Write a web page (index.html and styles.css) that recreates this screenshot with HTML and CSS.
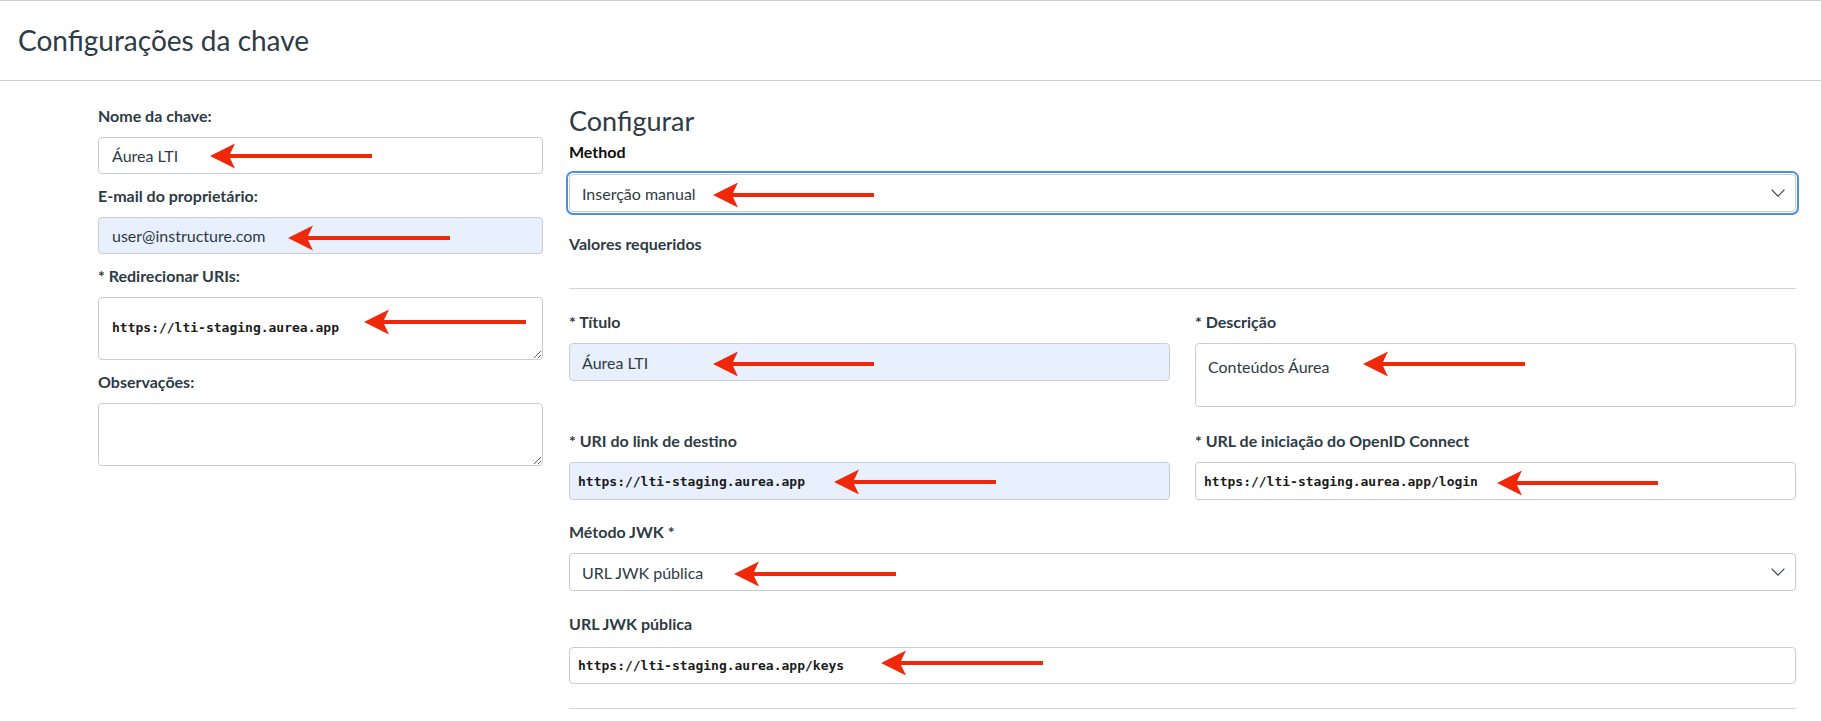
FILE: index.html
```html
<!DOCTYPE html>
<html lang="pt-BR">
<head>
<meta charset="utf-8">
<title>Configurações da chave</title>
<link rel="stylesheet" href="styles.css">
</head>
<body>
<header class="page-header">
  <h1 class="page-title">Configurações da chave</h1>
</header>
<main class="content">
  <section class="left-col">
    <div class="field">
      <label class="l-label">Nome da chave:</label>
      <input class="l-input" type="text" value="Áurea LTI">
    </div>
    <div class="field">
      <label class="l-label">E-mail do proprietário:</label>
      <input class="l-input autofill" type="text" value="user@instructure.com">
    </div>
    <div class="field">
      <label class="l-label">* Redirecionar URIs:</label>
      <textarea class="l-textarea mono">https://lti-staging.aurea.app</textarea>
    </div>
    <div class="field">
      <label class="l-label">Observações:</label>
      <textarea class="l-textarea"></textarea>
    </div>
  </section>

  <section class="right-col">
    <h2 class="r-heading">Configurar</h2>
    <div class="r-label method-label">Method</div>
    <div class="box select focused">
      <span>Inserção manual</span>
      <svg class="chevron" width="14" height="8" viewBox="0 0 14 8"><path d="M0.6 0.7 L7 7.2 L13.4 0.7" fill="none" stroke="#2d3b45" stroke-width="1.1"/></svg>
    </div>
    <div class="r-label section-label">Valores requeridos</div>
    <hr class="divider first-divider">

    <div class="grid2">
      <div class="cell">
        <div class="r-label">* Título</div>
        <div class="box autofill">Áurea LTI</div>
      </div>
      <div class="cell">
        <div class="r-label">* Descrição</div>
        <div class="box textarea-box">Conteúdos Áurea</div>
      </div>
      <div class="cell">
        <div class="r-label">* URI do link de destino</div>
        <div class="box autofill mono-box"><span class="mono">https://lti-staging.aurea.app</span></div>
      </div>
      <div class="cell">
        <div class="r-label">* URL de iniciação do OpenID Connect</div>
        <div class="box mono-box"><span class="mono">https://lti-staging.aurea.app/login</span></div>
      </div>
    </div>

    <div class="r-field">
      <div class="r-label">Método JWK *</div>
      <div class="box select">
        <span>URL JWK pública</span>
        <svg class="chevron" width="14" height="8" viewBox="0 0 14 8"><path d="M0.6 0.7 L7 7.2 L13.4 0.7" fill="none" stroke="#2d3b45" stroke-width="1.1"/></svg>
      </div>
    </div>
    <div class="r-field">
      <div class="r-label jwk-url-label">URL JWK pública</div>
      <div class="box mono-box short"><span class="mono">https://lti-staging.aurea.app/keys</span></div>
    </div>
    <hr class="divider last-divider">
  </section>
</main>

<svg class="annotations" width="1821" height="721" viewBox="0 0 1821 721">
  <g fill="#f0280a">
    <polygon points="210,156 235,143.5 230,154 372,154 372,158 230,158 235,168.5"/>
    <polygon points="288,238 313,225.5 308,236 450,236 450,240 308,240 313,250.5"/>
    <polygon points="364,322 389,309.5 384,320 526,320 526,324 384,324 389,334.5"/>
    <polygon points="713,195 738,182.5 733,193 874,193 874,197 733,197 738,207.5"/>
    <polygon points="713,364 738,351.5 733,362 874,362 874,366 733,366 738,376.5"/>
    <polygon points="834,482 859,469.5 854,480 996,480 996,484 854,484 859,494.5"/>
    <polygon points="1363,364 1388,351.5 1383,362 1525,362 1525,366 1383,366 1388,376.5"/>
    <polygon points="1497,483 1522,470.5 1517,481 1658,481 1658,485 1517,485 1522,495.5"/>
    <polygon points="734,574 759,561.5 754,572 896,572 896,576 754,576 759,586.5"/>
    <polygon points="881,663 906,650.5 901,661 1043,661 1043,665 901,665 906,675.5"/>
  </g>
</svg>
</body>
</html>
```

FILE: styles.css
```css
* { box-sizing: border-box; }

html, body {
  margin: 0;
  padding: 0;
}

body {
  position: relative;
  width: 1821px;
  height: 721px;
  overflow: hidden;
  background: #ffffff;
  color: #2d3b45;
  font-family: Lato, "Noto Sans", sans-serif;
  font-size: 16px;
}

/* ---------- header ---------- */
.page-header {
  border-top: 1px solid #c7cdd1;
  border-bottom: 1px solid #c7cdd1;
  padding: 23px 18px;
}

.page-title {
  margin: 0;
  font-size: 28px;
  line-height: 33px;
  font-weight: 400;
  color: #2d3b45;
}

/* ---------- layout ---------- */
.content {
  display: flex;
  align-items: flex-start;
  gap: 26px;
  padding-left: 98px;
}

.left-col {
  width: 445px;
  padding-top: 24px;
  display: flex;
  flex-direction: column;
  gap: 11px;
}

.right-col {
  width: 1227px;
  padding-top: 23px;
}

/* ---------- left column ---------- */
.field {
  display: flex;
  flex-direction: column;
}

.l-label {
  display: block;
  font-weight: 700;
  font-size: 16px;
  line-height: 22px;
  margin-bottom: 10px;
  color: #2d3b45;
}

.l-input {
  height: 37px;
  width: 100%;
  border: 1px solid #c7cdd1;
  border-radius: 4px;
  padding: 0 13px;
  font-family: Lato, "Noto Sans", sans-serif;
  font-size: 16px;
  color: #2d3b45;
  background: #ffffff;
  outline: none;
}

.autofill {
  background: #e8f0fe;
}

.l-textarea {
  display: block;
  width: 100%;
  height: 63px;
  border: 1px solid #c7cdd1;
  border-radius: 4px;
  padding: 20px 13px 0;
  font-family: Lato, "Noto Sans", sans-serif;
  font-size: 16px;
  color: #2d3b45;
  background: #ffffff;
  resize: vertical;
  outline: none;
}

.l-textarea.mono {
  font-family: "DejaVu Sans Mono", "Liberation Mono", monospace;
  font-size: 13px;
  font-weight: 700;
  line-height: 20px;
  color: #1b1b1b;
}

/* ---------- right column ---------- */
.r-heading {
  margin: 0;
  font-size: 27px;
  line-height: 33px;
  font-weight: 400;
  color: #2d3b45;
}

.r-label {
  font-weight: 700;
  font-size: 16px;
  line-height: 22px;
  margin-bottom: 10px;
  color: #2d3b45;
  white-space: nowrap;
}

.method-label {
  margin-top: 4px;
  margin-bottom: 11px;
  color: #0c0c0c;
}

.section-label {
  margin-top: 21px;
  margin-bottom: 0;
}

.box {
  position: relative;
  display: flex;
  align-items: center;
  height: 38px;
  border: 1px solid #c7cdd1;
  border-radius: 4px;
  padding: 0 12px;
  font-size: 16px;
  color: #2d3b45;
  background: #ffffff;
  white-space: nowrap;
}

.box.autofill {
  background: #e8f0fe;
}

.box.select {
  justify-content: space-between;
  padding-right: 10px;
}

.box.focused {
  outline: 2px solid #4a90e2;
  outline-offset: 1px;
}

.chevron {
  flex: none;
}

.box.textarea-box {
  height: 64px;
  align-items: flex-start;
  padding-top: 13px;
}

.box.mono-box {
  padding-left: 8px;
}

.box.short {
  height: 37px;
}

.mono {
  font-family: "DejaVu Sans Mono", "Liberation Mono", monospace;
  font-size: 13px;
  font-weight: 700;
  color: #1b1b1b;
}

.divider {
  border: 0;
  border-top: 1px solid #cfd4d8;
  margin: 0;
  width: 1227px;
}

.first-divider {
  margin-top: 33px;
}

.last-divider {
  margin-top: 24px;
}

.grid2 {
  display: grid;
  grid-template-columns: 1fr 1fr;
  column-gap: 25px;
  row-gap: 23px;
  margin-top: 22px;
}

.cell {
  display: flex;
  flex-direction: column;
}

.r-field {
  margin-top: 21px;
}

.r-field + .r-field {
  margin-top: 22px;
}

.jwk-url-label {
  margin-bottom: 12px;
}

/* ---------- annotation overlay ---------- */
.annotations {
  position: absolute;
  top: 0;
  left: 0;
  pointer-events: none;
}
```
